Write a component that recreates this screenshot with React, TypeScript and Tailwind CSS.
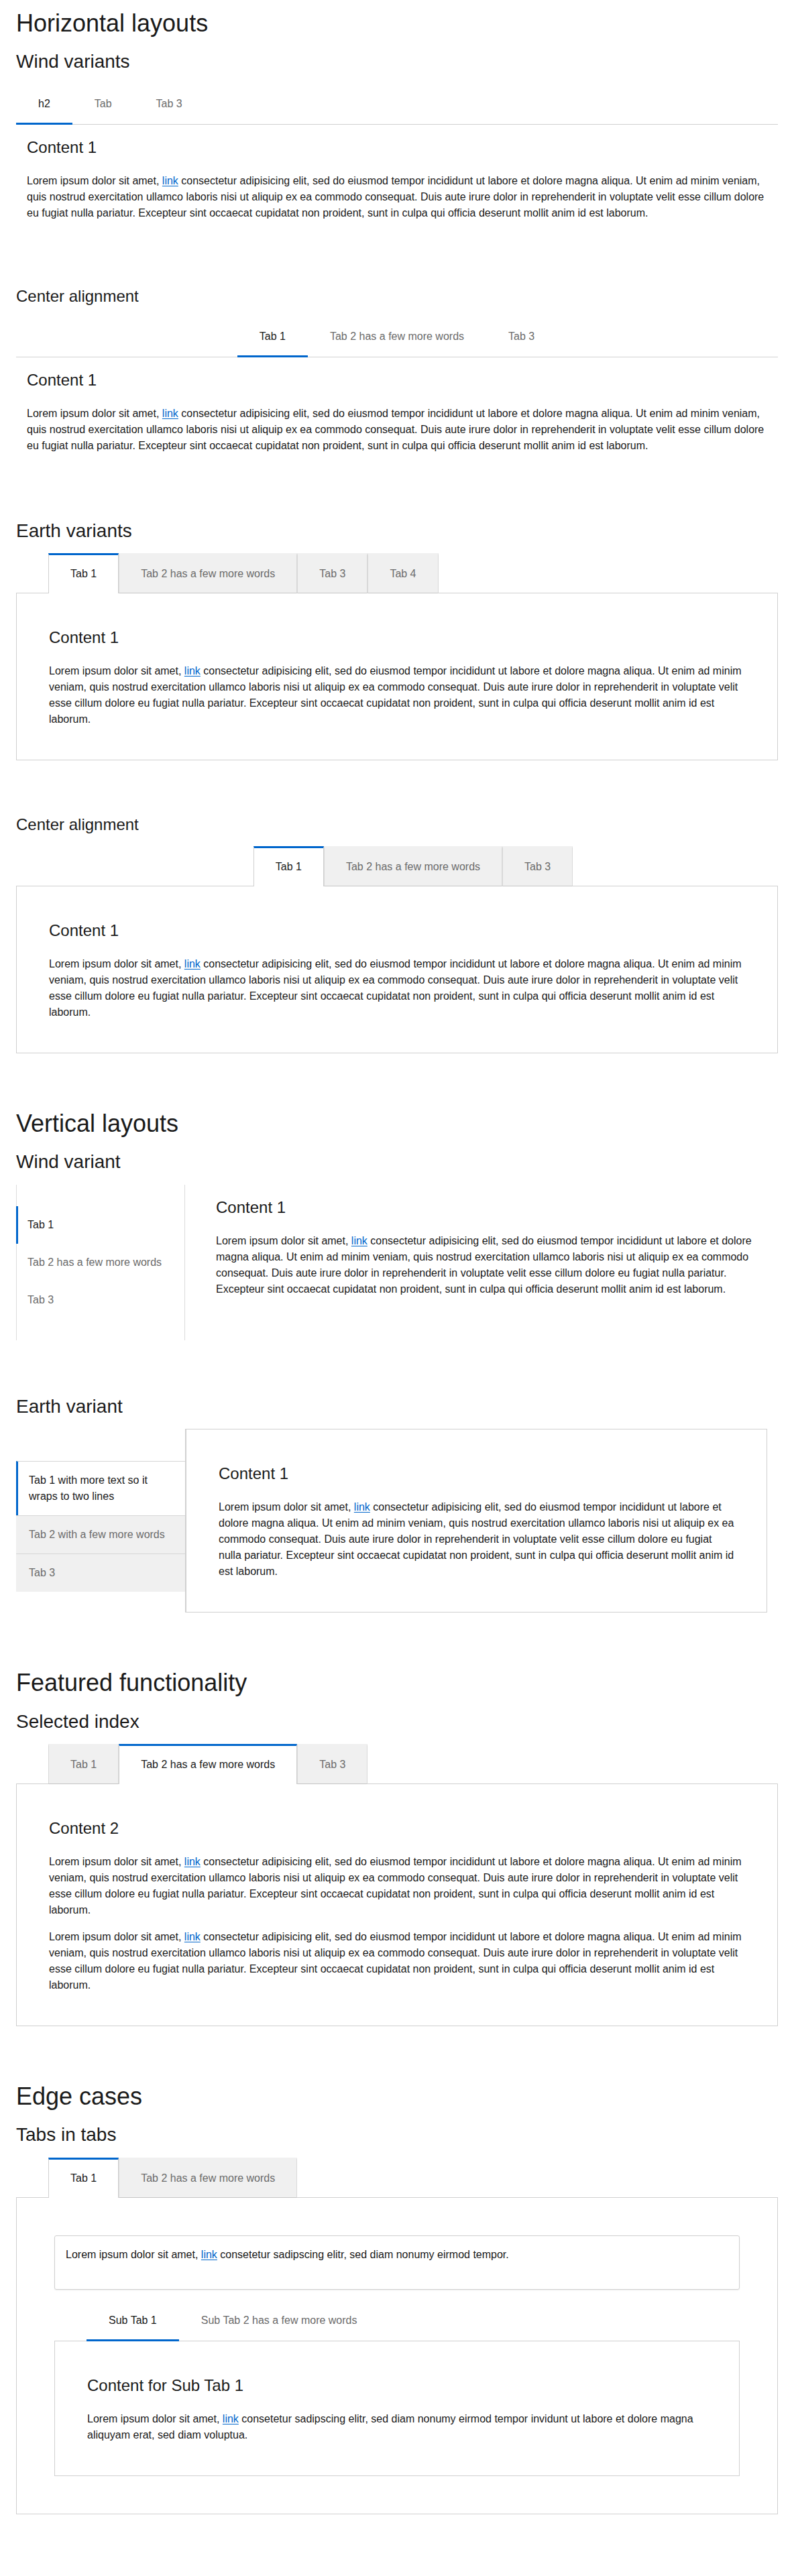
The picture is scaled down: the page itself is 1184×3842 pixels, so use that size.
import React from "react";

const LOREM_TAIL =
  " consectetur adipisicing elit, sed do eiusmod tempor incididunt ut labore et dolore magna aliqua. Ut enim ad minim veniam, quis nostrud exercitation ullamco laboris nisi ut aliquip ex ea commodo consequat. Duis aute irure dolor in reprehenderit in voluptate velit esse cillum dolore eu fugiat nulla pariatur. Excepteur sint occaecat cupidatat non proident, sunt in culpa qui officia deserunt mollit anim id est laborum.";

function Link() {
  return <a className="text-[#0066cc] underline underline-offset-2">link</a>;
}

function Lorem({ className = "" }: { className?: string }) {
  return (
    <p className={"text-base leading-6 " + className}>
      Lorem ipsum dolor sit amet, <Link />
      {LOREM_TAIL}
    </p>
  );
}

function H1({ children, first = false }: { children: React.ReactNode; first?: boolean }) {
  return (
    <h1 className={first ? "text-[36px] leading-[1.2] font-normal" : "mt-[83px] text-[36px] leading-[1.2] font-normal"}>
      {children}
    </h1>
  );
}

function H2({ children, afterH1 = false }: { children: React.ReactNode; afterH1?: boolean }) {
  return (
    <h2 className={afterH1 ? "mt-[19px] text-[28px] leading-[1.2] font-normal" : "mt-[82px] text-[28px] leading-[1.2] font-normal"}>
      {children}
    </h2>
  );
}

function H3Section({ children }: { children: React.ReactNode }) {
  return <h3 className="mt-[82px] text-[24px] leading-[1.2] font-normal">{children}</h3>;
}

function ContentTitle({ children }: { children: React.ReactNode }) {
  return <h3 className="mb-5 text-[24px] leading-9 font-normal">{children}</h3>;
}

function WindTabs({ tabs, active, center = false, indent = false }: { tabs: string[]; active: number; center?: boolean; indent?: boolean }) {
  return (
    <div
      className={
        center
          ? "relative z-10 -mb-px flex justify-center"
          : indent
          ? "relative z-10 -mb-px flex pl-12"
          : "relative z-10 -mb-px flex"
      }
    >
      {tabs.map((t, i) => (
        <div
          key={t}
          className={
            i === active
              ? "px-[33px] pt-4 pb-4 border-b-[3px] border-[#0066cc] text-base leading-6 text-[#1a1a1a] whitespace-nowrap"
              : "px-[33px] pt-4 pb-4 border-b-[3px] border-transparent text-base leading-6 text-[#6b6b6b] whitespace-nowrap"
          }
        >
          {t}
        </div>
      ))}
    </div>
  );
}

function EarthTabs({ tabs, active, center = false }: { tabs: string[]; active: number; center?: boolean }) {
  return (
    <div className={center ? "relative z-10 -mb-px flex justify-center pl-12" : "relative z-10 -mb-px flex pl-12"}>
      {tabs.map((t, i) => (
        <div
          key={t}
          className={
            i === active
              ? "px-8 pt-4 pb-[17px] bg-white border-x border-[#cfcfcf] border-t-[3px] border-t-[#0066cc] text-base leading-6 text-[#1a1a1a] whitespace-nowrap"
              : "px-8 pt-4 pb-4 bg-[#f0f0f0] border-x border-[#d9d9d9] border-t-[3px] border-t-transparent border-b border-b-[#c4c4c4] text-base leading-6 text-[#6b6b6b] whitespace-nowrap"
          }
        >
          {t}
        </div>
      ))}
    </div>
  );
}

function WindHorizontal({ center = false, first = false }: { center?: boolean; first?: boolean }) {
  return (
    <div className={first ? "mt-[18px]" : "mt-[17px]"}>
      <div className="border-b border-[#d0d0d0]">
        <WindTabs tabs={center ? ["Tab 1", "Tab 2 has a few more words", "Tab 3"] : ["h2", "Tab", "Tab 3"]} active={0} center={center} />
      </div>
      <div className="px-4 pt-4 pb-4">
        <ContentTitle>Content 1</ContentTitle>
        <Lorem />
      </div>
    </div>
  );
}

function EarthHorizontal({ tabs, active, center = false, children }: { tabs: string[]; active: number; center?: boolean; children: React.ReactNode }) {
  return (
    <div className="mt-[17px]">
      <EarthTabs tabs={tabs} active={active} center={center} />
      <div className="border border-[#d0d0d0] p-12">{children}</div>
    </div>
  );
}

function VerticalWind() {
  const tabs = ["Tab 1", "Tab 2 has a few more words", "Tab 3"];
  return (
    <div className="mt-[17px] flex">
      <div className="w-[252px] shrink-0 border-x border-[#dcdcdc] py-8">
        {tabs.map((t, i) => (
          <div
            key={t}
            className={
              i === 0
                ? "-ml-px border-l-[3px] border-[#0066cc] pl-[14px] pr-4 py-4 text-base leading-6 text-[#1a1a1a]"
                : "pl-4 pr-4 py-4 text-base leading-6 text-[#6b6b6b]"
            }
          >
            {t}
          </div>
        ))}
      </div>
      <div className="flex-1 pl-[46px] pr-8 pt-4">
        <ContentTitle>Content 1</ContentTitle>
        <Lorem />
      </div>
    </div>
  );
}

function VerticalEarth() {
  const tabs = ["Tab 1 with more text so it wraps to two lines", "Tab 2 with a few more words", "Tab 3"];
  return (
    <div className="mt-[17px] flex items-start">
      <div className="mt-12 w-[252px] shrink-0">
        {tabs.map((t, i) => (
          <div
            key={t}
            className={
              i === 0
                ? "border-t border-[#d6d6d6] border-l-[3px] border-l-[#0066cc] bg-white pl-4 pr-4 py-4 text-base leading-6 text-[#1a1a1a]"
                : "border-t border-[#d6d6d6] bg-[#f0f0f0] pl-[19px] pr-4 py-4 text-base leading-6 text-[#6b6b6b]"
            }
          >
            {t}
          </div>
        ))}
      </div>
      <div className="mr-4 flex-1 border border-l-2 border-[#d0d0d0] p-12">
        <ContentTitle>Content 1</ContentTitle>
        <Lorem />
      </div>
    </div>
  );
}

function TabsInTabs() {
  return (
    <div className="mt-[17px]">
      <EarthTabs tabs={["Tab 1", "Tab 2 has a few more words"]} active={0} />
      <div className="border border-[#d0d0d0] p-14">
        <div className="rounded-[3px] border border-[#d0d0d0] px-4 pt-4 pb-[39px] shadow-[0_1px_2px_rgba(0,0,0,0.08)]">
          <p className="text-base leading-6">
            Lorem ipsum dolor sit amet, <Link /> consetetur sadipscing elitr, sed diam nonumy eirmod tempor.
          </p>
        </div>
        <div className="mt-[18px]">
          <WindTabs tabs={["Sub Tab 1", "Sub Tab 2 has a few more words"]} active={0} indent />
          <div className="border border-[#d0d0d0] p-12">
            <ContentTitle>Content for Sub Tab 1</ContentTitle>
            <p className="text-base leading-6">
              Lorem ipsum dolor sit amet, <Link /> consetetur sadipscing elitr, sed diam nonumy eirmod tempor invidunt ut labore et dolore magna aliquyam erat, sed diam voluptua.
            </p>
          </div>
        </div>
      </div>
    </div>
  );
}

export default function App() {
  return (
    <div className="min-h-[3842px] bg-white px-6 pt-[13px] pb-[94px] font-[family-name:Liberation_Sans,Arial,sans-serif] text-[#1a1a1a]">
      <H1 first>Horizontal layouts</H1>
      <H2 afterH1>Wind variants</H2>
      <WindHorizontal first />

      <H3Section>Center alignment</H3Section>
      <WindHorizontal center />

      <H2>Earth variants</H2>
      <EarthHorizontal tabs={["Tab 1", "Tab 2 has a few more words", "Tab 3", "Tab 4"]} active={0}>
        <ContentTitle>Content 1</ContentTitle>
        <Lorem />
      </EarthHorizontal>

      <H3Section>Center alignment</H3Section>
      <EarthHorizontal tabs={["Tab 1", "Tab 2 has a few more words", "Tab 3"]} active={0} center>
        <ContentTitle>Content 1</ContentTitle>
        <Lorem />
      </EarthHorizontal>

      <H1>Vertical layouts</H1>
      <H2 afterH1>Wind variant</H2>
      <VerticalWind />

      <H2>Earth variant</H2>
      <VerticalEarth />

      <H1>Featured functionality</H1>
      <H2 afterH1>Selected index</H2>
      <EarthHorizontal tabs={["Tab 1", "Tab 2 has a few more words", "Tab 3"]} active={1}>
        <ContentTitle>Content 2</ContentTitle>
        <Lorem className="mb-4" />
        <Lorem />
      </EarthHorizontal>

      <H1>Edge cases</H1>
      <H2 afterH1>Tabs in tabs</H2>
      <TabsInTabs />
    </div>
  );
}
